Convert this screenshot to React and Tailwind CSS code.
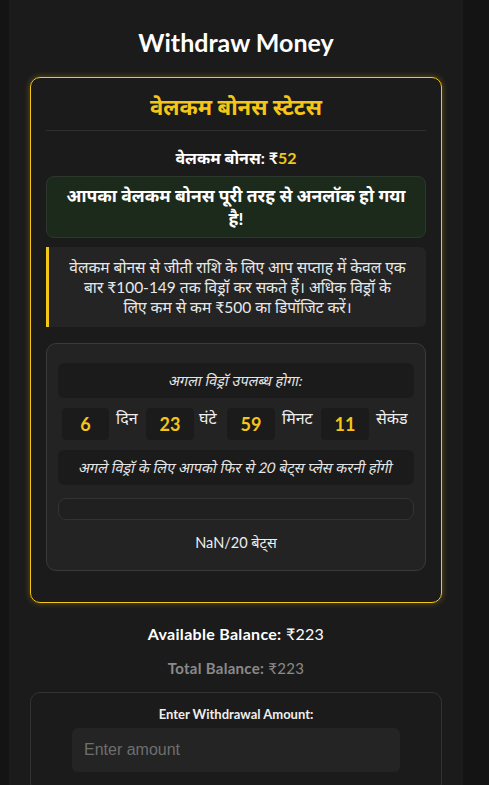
export default function App() {
  return (
    <div className="min-h-[785px] bg-[#141414] flex justify-start">
      <div className="w-[454px] ml-[9px] bg-[#1b1b1b] px-[21px] pt-[26px] pb-[20px] text-white font-['Lato','Noto_Sans',sans-serif]">
        <h1 className="text-center text-[25px] font-bold leading-[32px] mb-[19px]">Withdraw Money</h1>

        <div className="border border-[#f5c518] rounded-[10px] shadow-[0_0_6px_rgba(245,197,24,0.35)] px-[15px] pt-[12px] pb-[31px]">
          <div className="text-center text-[#f5c518] text-[22px] font-bold leading-[34px] pb-[6px] border-b border-[#2e2e2e]">वेलकम बोनस स्टेटस</div>
          <div className="text-center text-[16px] font-bold leading-[24px] mt-[15px]">वेलकम बोनस: ₹<span className="text-[#f5c518]">52</span></div>
          <div className="mt-[6px] bg-[#1c2a1c] border border-[#2d372d] rounded-[8px] px-[12px] py-[7px] text-center text-[17.5px] font-bold leading-[23px]">आपका वेलकम बोनस पूरी तरह से अनलॉक हो गया<br />है!</div>
          <div className="mt-[9px] bg-[#242424] border-l-[3px] border-[#f5c518] rounded-r-[6px] px-[12px] py-[10px] text-center text-[15.5px] leading-[20px] text-[#e8e8e8]">वेलकम बोनस से जीती राशि के लिए आप सप्ताह में केवल एक बार ₹100-149 तक विड्रॉ कर सकते हैं। अधिक विड्रॉ के<br />लिए कम से कम ₹500 का डिपॉजिट करें।</div>

          <div className="mt-[16px] bg-[#232323] border border-[#3a3a3a] rounded-[10px] px-[11px] pt-[19px] pb-[16px]">
            <div className="bg-[#1b1b1b] rounded-[6px] h-[35px] flex items-center justify-center text-[14.5px] text-[#e6e6e6]"><span className="inline-block -skew-x-12">अगला विड्रॉ उपलब्ध होगा:</span></div>
            <div className="flex items-start justify-center mt-[10px] h-[32px] pl-[4px]">
              <div className="w-[47px] h-[32px] bg-[#1b1b1b] rounded-[4px] flex items-center justify-center text-[#f5c518] font-bold text-[18px]">6</div>
              <div className="w-[37px] pl-[7px] text-[16px] leading-[20px] text-[#eee]">दिन</div>
              <div className="w-[48px] h-[32px] bg-[#1b1b1b] rounded-[4px] flex items-center justify-center text-[#f5c518] font-bold text-[18px]">23</div>
              <div className="w-[33px] pl-[5px] text-[16px] leading-[20px] text-[#eee]">घंटे</div>
              <div className="w-[48px] h-[32px] bg-[#1b1b1b] rounded-[4px] flex items-center justify-center text-[#f5c518] font-bold text-[18px]">59</div>
              <div className="w-[46px] pl-[7px] text-[16px] leading-[20px] text-[#eee]">मिनट</div>
              <div className="w-[48px] h-[32px] bg-[#1b1b1b] rounded-[4px] flex items-center justify-center text-[#f5c518] font-bold text-[18px]">11</div>
              <div className="w-[45px] pl-[7px] text-[16px] leading-[20px] text-[#eee] whitespace-nowrap">सेकंड</div>
            </div>
            <div className="mt-[10px] bg-[#1b1b1b] rounded-[6px] h-[35px] flex items-center justify-center text-[14.5px] text-[#e6e6e6] whitespace-nowrap"><span className="inline-block -skew-x-12">अगले विड्रॉ के लिए आपको फिर से 20 बेट्स प्लेस करनी होंगी</span></div>
            <div className="mt-[13px] h-[22px] border border-[#333] rounded-[8px] bg-[#202020]"></div>
            <div className="mt-[12px] text-center text-[14.5px] leading-[22px] text-[#eee]">NaN/20 बेट्स</div>
          </div>
        </div>

        <div className="mt-[20px] text-center text-[16px] tracking-[0.3px] leading-[22px]"><span className="font-bold">Available Balance:</span> ₹223</div>
        <div className="mt-[12px] text-center text-[15px] tracking-[0.3px] leading-[22px] text-[#8a8a8a]"><span className="font-bold">Total Balance:</span> ₹223</div>

        <div className="mt-[13px] border border-[#333] rounded-[10px] pt-[12px] pb-[20px] flex flex-col items-center">
          <div className="text-[13px] font-bold leading-[18px] text-[#eee]">Enter Withdrawal Amount:</div>
          <input placeholder="Enter amount" className="mt-[5px] w-[328px] h-[44px] bg-[#242424] rounded-[6px] px-[12px] text-[16px] font-['Liberation_Sans',Arial,sans-serif] text-white placeholder:text-[#6e6e6e] outline-none" />
        </div>
      </div>
    </div>
  );
}
